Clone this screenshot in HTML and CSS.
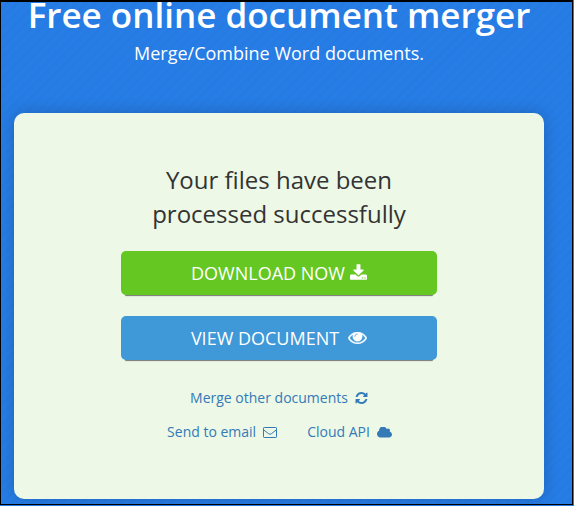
FILE: index.html
```html
<!DOCTYPE html>
<html lang="en">
<head>
<meta charset="utf-8">
<title>Free online document merger</title>
<link rel="stylesheet" href="styles.css">
</head>
<body>
<main class="frame">
  <header class="hero">
    <h1 class="title">Free online document merger</h1>
    <p class="subtitle">Merge/Combine Word documents.</p>
  </header>
  <section class="card">
    <h2 class="message">Your files have been<br>processed successfully</h2>
    <a class="btn btn-download"><span class="btn-label">DOWNLOAD NOW</span><svg class="icon-download" viewBox="0 0 1664 1536"><path d="M1280 1344q0-26-19-45t-45-19-45 19-19 45 19 45 45 19 45-19 19-45zm256 0q0-26-19-45t-45-19-45 19-19 45 19 45 45 19 45-19 19-45zm128-224v320q0 40-28 68t-68 28h-1472q-40 0-68-28t-28-68v-320q0-40 28-68t68-28h465l135 136q58 56 136 56t136-56l136-136h464q40 0 68 28t28 68zm-325-569q17 41-14 70l-448 448q-18 19-45 19t-45-19l-448-448q-31-29-14-70 17-39 59-39h256v-448q0-26 19-45t45-19h256q26 0 45 19t19 45v448h256q42 0 59 39z"/></svg></a>
    <a class="btn btn-view"><span class="btn-label">VIEW DOCUMENT</span><svg class="icon-eye" viewBox="0 384 1792 1152"><path d="M1664 960q-152-236-381-353 61 104 61 225 0 185-131.500 316.500t-316.500 131.500-316.500-131.500-131.500-316.500q0-121 61-225-229 117-381 353 133 205 333.500 326.500t434.500 121.500 434.500-121.500 333.500-326.500zm-720-384q0-20-14-34t-34-14q-125 0-214.500 89.500t-89.500 214.500q0 20 14 34t34 14 34-14 14-34q0-86 61-147t147-61q20 0 34-14t14-34zm848 384q0 34-20 69-140 230-376.500 368.500t-499.500 138.500-499.500-139-376.500-368q-20-35-20-69t20-69q140-229 376.500-368t499.500-139 499.500 139 376.500 368q20 35 20 69z"/></svg></a>
    <nav class="links">
      <div class="row">
        <a class="link"><span>Merge other documents</span><svg class="icon-refresh" viewBox="128 128 1536 1536"><path d="M1639 1056q0 5-1 7-64 268-268 434.500t-478 166.500q-146 0-282.500-55t-243.500-157l-129 129q-19 19-45 19t-45-19-19-45v-448q0-26 19-45t45-19h448q26 0 45 19t19 45-19 45l-137 137q71 66 161 102t187 36q134 0 250-65t186-179q11-17 53-117 8-23 30-23h192q13 0 22.500 9.500t9.500 22.500zm25-800v448q0 26-19 45t-45 19h-448q-26 0-45-19t-19-45 19-45l138-138q-148-137-349-137-134 0-250 65t-186 179q-11 17-53 117-8 23-30 23h-199q-13 0-22.500-9.500t-9.500-22.500v-7q65-268 270-434.500t480-166.500q146 0 284 55.500t245 156.500l130-129q19-19 45-19t45 19 19 45z"/></svg></a>
      </div>
      <div class="row row-second">
        <a class="link"><span>Send to email</span><svg class="icon-mail" viewBox="0 0 14 11"><path d="M1.200.5h11.600q.7 0 .7.700v8.600q0 .7-.7.700H1.200q-.7 0-.7-.7V1.200q0-.7.700-.7zM.7 2.900l4.700 3.700q1.600 1.300 3.200 0l4.700-3.700"/></svg></a>
        <a class="link"><span>Cloud API</span><svg class="icon-cloud" viewBox="0 256 1920 1280"><path d="M1920 1152q0 159-112.500 271.500t-271.500 112.500h-1088q-185 0-316.500-131.500t-131.500-316.500q0-132 71-241.500t187-163.500q-2-28-2-43 0-212 150-362t362-150q158 0 286.500 88t187.500 230q70-62 166-62 106 0 181 75t75 181q0 75-41 138 129 30 213 134.500t84 239.500z"/></svg></a>
      </div>
    </nav>
  </section>
</main>
</body>
</html>
```
FILE: styles.css
```css
* {
  box-sizing: border-box;
}

body {
  margin: 0;
  width: 574px;
  height: 506px;
  overflow: hidden;
  background: #267ce4;
  font-family: "Open Sans", "Noto Sans", sans-serif;
}

.frame {
  width: 573px;
  height: 505px;
  overflow: hidden;
  border: solid #000;
  border-width: 2px 1px 1px;
  padding: 0 28px 5px 13px;
  background: repeating-linear-gradient(135deg, #267de6 0, #267de6 3px, #267ae0 5px, #267de6 7px);
}

.hero {
  display: flow-root;
  height: 111px;
  color: #fff;
  text-align: center;
}

.title {
  margin: -12px 0 1px;
  font-size: 35px;
  font-weight: 600;
  line-height: 50px;
  white-space: nowrap;
}

.subtitle {
  margin: 0;
  font-size: 18px;
  line-height: 25px;
}

.card {
  height: 386px;
  padding: 50px 107px 0;
  border-radius: 10px;
  background: #edf8e7;
  box-shadow: 0 0 16px rgba(0, 0, 0, .2);
}

.message {
  margin: 0 0 20px;
  color: #333;
  font-size: 24px;
  font-weight: 400;
  line-height: 34px;
  text-align: center;
}

.btn {
  display: flex;
  align-items: center;
  justify-content: center;
  height: 44px;
  border-radius: 5px;
  color: #fff;
  font-size: 18px;
  line-height: 44px;
  box-shadow: 0 5px 1px -4px #777;
}

.btn-download {
  gap: 5px;
  margin-bottom: 21px;
  background: #65c722;
}

.btn-view {
  gap: 9px;
  background: #3f98d8;
}

svg {
  flex: none;
  fill: currentColor;
}

.icon-download {
  width: 17px;
  height: 16px;
  margin-bottom: 2px;
}

.icon-eye {
  width: 19px;
  height: 12px;
  stroke: currentColor;
  stroke-width: 40px;
}

.links {
  padding-top: 28px;
  color: #337ab7;
  font-size: 14px;
  line-height: 20px;
}

.row {
  display: flex;
  justify-content: center;
}

.row-second {
  gap: 30px;
  margin-top: 14px;
  padding-left: 1px;
}

.link {
  display: flex;
  align-items: center;
  gap: 7px;
}

.icon-refresh {
  width: 13px;
  height: 12px;
}

.icon-mail {
  width: 14px;
  height: 11px;
  fill: none;
  stroke: currentColor;
}

.icon-cloud {
  width: 15px;
  height: 11px;
}
```
